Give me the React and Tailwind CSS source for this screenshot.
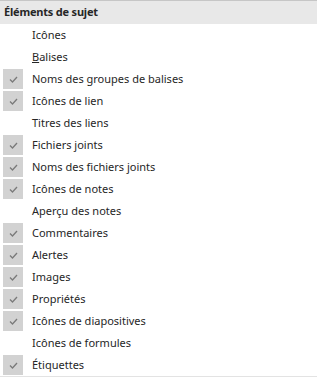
import React from 'react';

const ITEMS = [
  { label: 'Icônes', on: false },
  { label: 'Balises', on: false, key: 'B' },
  { label: 'Noms des groupes de balises', on: true },
  { label: 'Icônes de lien', on: true },
  { label: 'Titres des liens', on: false },
  { label: 'Fichiers joints', on: true },
  { label: 'Noms des fichiers joints', on: true },
  { label: 'Icônes de notes', on: true },
  { label: 'Aperçu des notes', on: false },
  { label: 'Commentaires', on: true },
  { label: 'Alertes', on: true },
  { label: 'Images', on: true },
  { label: 'Propriétés', on: true },
  { label: 'Icônes de diapositives', on: true },
  { label: 'Icônes de formules', on: false },
  { label: 'Étiquettes', on: true },
];

const Check = () => (
  <svg width="9" height="7" viewBox="0 0 9 7" fill="none">
    <path d="M1 3.5 L3.5 6 L8 1" stroke="#7a7a7a" strokeWidth="1.3" />
  </svg>
);

export default function App() {
  return (
    <div className="w-[317px] h-[377px] bg-white text-[11px] text-[#262626]" style={{ fontFamily: '"Noto Sans", sans-serif' }}>
      {/* header */}
      <div className="h-[24px] border-t border-[#c6c6c6] bg-[#e8e8e8] flex items-center pl-[4px] pb-[1px] font-bold text-[11px] tracking-[-0.2px]">
        Éléments de sujet
      </div>
      <div className="border-b border-[#e3e3e3]">
        {ITEMS.map((it, i) => (
          <div key={i} className="h-[22px] flex items-center">
            <div className="w-[20px] h-[20px] ml-[3px] flex items-center justify-center">
              {it.on && (
                <div className="w-[20px] h-[20px] bg-[#d2d2d2] flex items-center justify-center">
                  <Check />
                </div>
              )}
            </div>
            <span className="ml-[9px] leading-none pb-[2px]">
              {it.key ? (<><span className="underline">{it.key}</span>{it.label.slice(1)}</>) : it.label}
            </span>
          </div>
        ))}
      </div>
    </div>
  );
}
